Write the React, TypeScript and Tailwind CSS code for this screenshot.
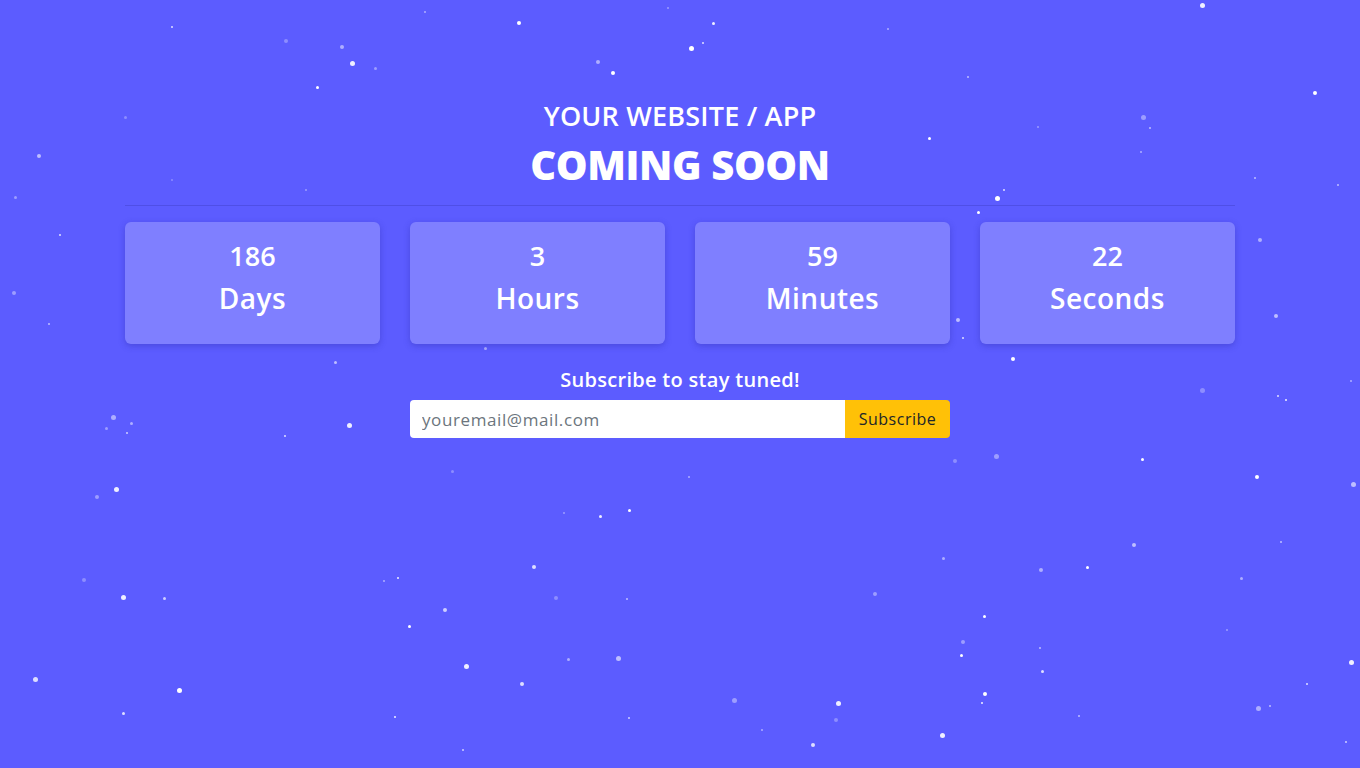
const stars: [number, number, number, number][] = [
  [519, 23, 4, 1], [713, 23, 3, 0.9], [691, 48, 5, 1], [703, 43, 2, 0.8], [352, 63, 5, 0.9], [342, 47, 4, 0.5],
  [613, 73, 4, 1], [598, 62, 4, 0.5], [317, 87, 3, 1], [375, 68, 3, 0.4], [286, 41, 4, 0.3], [172, 27, 2, 0.8],
  [1202, 5, 5, 0.9], [1315, 93, 4, 1], [1143, 117, 5, 0.4], [1150, 128, 2, 0.6], [929, 138, 3, 1], [968, 77, 2, 0.6],
  [997, 198, 5, 1], [978, 212, 3, 1], [1004, 190, 2, 0.8], [39, 156, 4, 0.6], [15, 197, 3, 0.4], [125, 117, 3, 0.3],
  [60, 235, 2, 0.8], [14, 293, 4, 0.4], [49, 324, 2, 0.6], [1260, 240, 4, 0.5], [1276, 316, 4, 0.6], [958, 320, 4, 0.6],
  [963, 338, 2, 0.8], [1013, 359, 4, 1], [335, 362, 3, 0.6], [485, 348, 3, 0.5], [113, 417, 5, 0.5], [131, 423, 3, 0.5],
  [106, 428, 3, 0.4], [349, 425, 5, 0.9], [127, 433, 2, 0.7], [285, 436, 2, 0.8], [1202, 390, 5, 0.3], [1278, 396, 2, 0.8],
  [1286, 400, 2, 0.9], [1351, 381, 2, 0.5], [1142, 459, 3, 1], [1257, 477, 4, 1], [1353, 484, 5, 0.6], [996, 456, 5, 0.4],
  [955, 461, 4, 0.3], [116, 489, 5, 0.9], [97, 497, 4, 0.4], [629, 510, 3, 1], [600, 516, 3, 0.9], [452, 471, 3, 0.3],
  [534, 567, 4, 0.8], [564, 513, 2, 0.4], [689, 477, 2, 0.5], [1134, 545, 4, 0.6], [1087, 567, 3, 1], [1041, 570, 4, 0.5],
  [943, 558, 3, 0.5], [1241, 578, 3, 0.5], [1281, 542, 2, 0.6], [123, 597, 5, 0.9], [164, 598, 3, 0.7], [84, 580, 4, 0.3],
  [398, 578, 2, 0.9], [384, 581, 2, 0.5], [445, 610, 4, 0.7], [409, 626, 3, 1], [556, 598, 4, 0.3], [627, 599, 2, 0.6],
  [875, 594, 4, 0.4], [984, 616, 3, 1], [963, 642, 4, 0.4], [961, 655, 3, 1], [1040, 648, 2, 0.6], [1042, 671, 3, 0.8],
  [1351, 662, 5, 0.9], [1307, 684, 2, 0.8], [35, 679, 5, 0.8], [179, 690, 5, 1], [466, 666, 5, 0.9], [522, 684, 4, 0.8],
  [568, 659, 3, 0.5], [618, 658, 5, 0.6], [734, 700, 5, 0.4], [838, 703, 5, 0.9], [836, 720, 4, 0.3], [985, 694, 4, 1],
  [982, 703, 2, 0.9], [1258, 708, 5, 0.5], [1270, 706, 2, 0.6], [123, 713, 3, 0.8], [395, 717, 2, 0.9], [629, 718, 2, 0.7],
  [762, 730, 2, 0.5], [813, 745, 4, 0.8], [942, 735, 5, 0.9], [463, 750, 2, 0.7], [1079, 716, 2, 0.6], [1227, 630, 2, 0.4],
  [1346, 742, 2, 0.7], [1338, 185, 2, 0.6], [1255, 178, 2, 0.6], [888, 29, 2, 0.5], [1038, 127, 2, 0.4], [1141, 152, 2, 0.5],
  [668, 8, 2, 0.4], [425, 12, 2, 0.5], [306, 190, 2, 0.4], [172, 180, 2, 0.3],
];

const units = [
  { value: 186, label: "Days" },
  { value: 3, label: "Hours" },
  { value: 59, label: "Minutes" },
  { value: 22, label: "Seconds" },
];

export default function App() {
  return (
    <div
      className="relative h-[768px] w-full overflow-hidden bg-[#5c5cff] text-white"
      style={{ fontFamily: '"Open Sans", "Noto Sans", sans-serif' }}
    >
      {/* particle canvas */}
      <div className="absolute inset-0">
        {stars.map(([x, y, s, o], i) => (
          <span
            key={i}
            className="absolute rounded-full bg-white"
            style={{ left: x - s / 2, top: y - s / 2, width: s, height: s, opacity: o }}
          />
        ))}
      </div>

      <div className="relative mx-auto w-[1110px] pt-[98px]">
        <div className="flex flex-col items-center border-b border-[#4f4fe6] pb-[14px]">
          <h2 className="text-[27px] leading-[36px] font-semibold tracking-[0.2px]">YOUR WEBSITE / APP</h2>
          <h1 className="mt-[5px] text-[40px] leading-[52px] font-extrabold tracking-[-0.4px]">COMING SOON</h1>
        </div>

        <div className="mt-4 grid grid-cols-4 gap-[30px]">
          {units.map((u) => (
            <div
              key={u.label}
              className="flex h-[122px] flex-col items-center justify-center rounded-md bg-[#7f7fff] pb-[10px] shadow-[0_2px_6px_rgba(40,40,160,0.35)]"
            >
              <span className="text-[27px] leading-[38px] font-semibold">{u.value}</span>
              <span className="mt-[2px] text-[28px] leading-[42px] font-semibold tracking-[0.5px]">{u.label}</span>
            </div>
          ))}
        </div>

        <div className="mt-[23px] flex flex-col items-center">
          <p className="text-[20px] leading-[26px] font-semibold tracking-[0.3px]">Subscribe to stay tuned!</p>
          <div className="mt-[7px] flex h-[38px] w-[540px]">
            <input
              className="h-full flex-1 rounded-l bg-white px-3 text-[17px] tracking-[0.6px] text-gray-700 placeholder:text-[#6c757d] outline-none"
              placeholder="youremail@mail.com"
            />
            <button className="h-full w-[105px] rounded-r bg-[#ffc107] text-[16px] tracking-[0.5px] text-[#212529]">
              Subscribe
            </button>
          </div>
        </div>
      </div>
    </div>
  );
}
